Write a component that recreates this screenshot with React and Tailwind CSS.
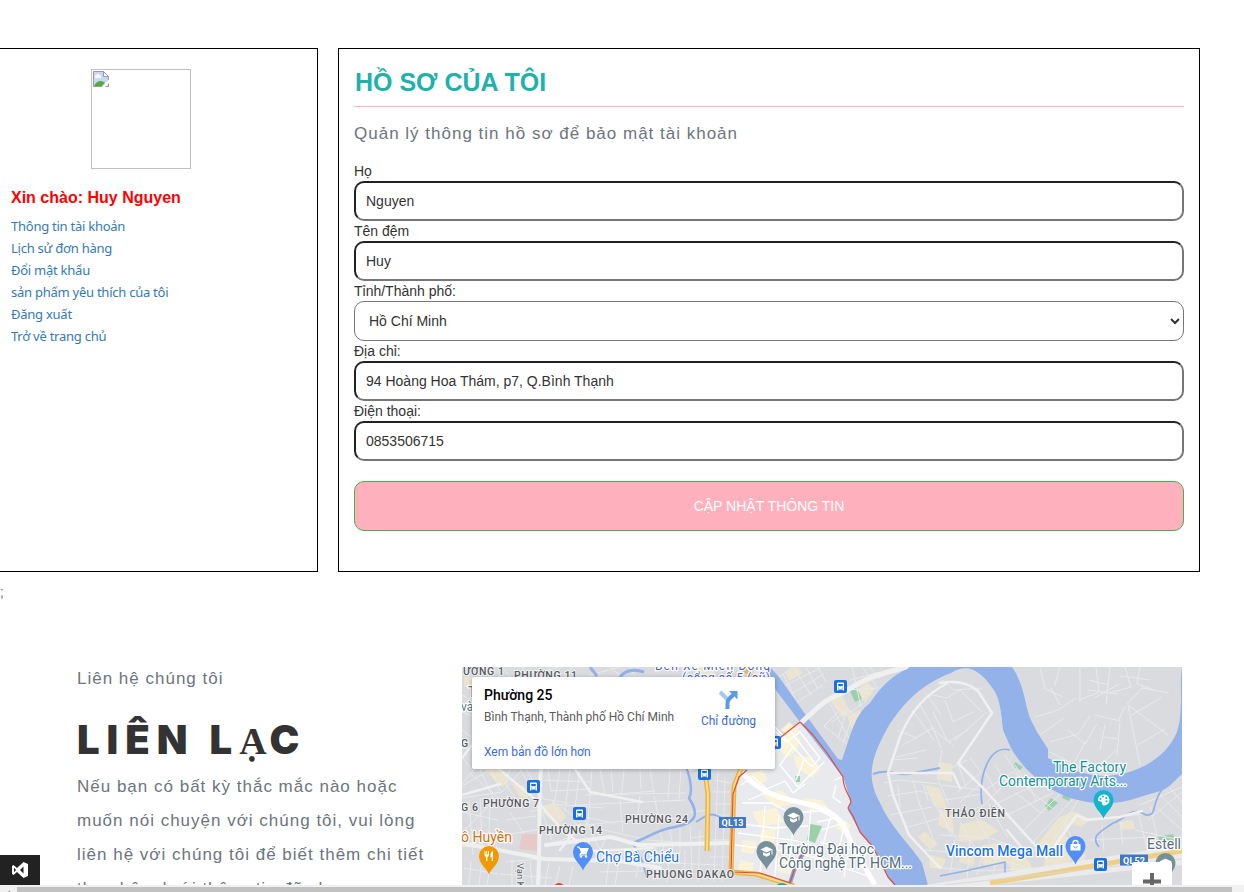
import React from 'react';

const LINKS = [
  'Thông tin tài khoản',
  'Lịch sử đơn hàng',
  'Đổi mật khẩu',
  'sản phẩm yêu thích của tôi',
  'Đăng xuất',
  'Trở về trang chủ',
];

function BrokenImage() {
  return (
    <div className="ml-[80px] h-[100px] w-[100px] border border-[#c0c0c0] p-px">
      <svg width="16" height="16" viewBox="0 0 16 16">
        <path d="M0.5 0.5H10.5L15.5 5.5V15.5H0.5Z" fill="#c6d8f7" stroke="#9a9a9a" />
        <path d="M2 6a1.6 1.6 0 0 1 1.5-2 2 2 0 0 1 3.6 0.6A1.3 1.3 0 0 1 7.5 7H3Z" fill="#fff" />
        <path d="M1 15c1-3 4-5 6.500-5 2 0 3.500 1 4.500 2L9 15Z" fill="#54ad38" />
        <path d="M10.500 0.500V5.500H15.500Z" fill="#fff" stroke="#9a9a9a" />
        <path d="M16 8.500 8.500 16H12L16 12Z" fill="#fff" />
      </svg>
    </div>
  );
}

function Field({ label, value }) {
  return (
    <label className="block">
      <span className="block h-5 leading-5">{label}</span>
      <input
        className="block h-10 w-full rounded-[10px] border-2 border-[#767676] bg-white px-[10px] text-[14px] outline-none [border-style:inset]"
        defaultValue={value}
      />
    </label>
  );
}

function Bus({ x, y }) {
  return (
    <g transform={`translate(${x - 6.5} ${y - 6.5})`}>
      <rect width="13" height="13" rx="2" fill="#1a6fe0" />
      <path d="M3 3.500Q3 2.500 4 2.500H9Q10 2.500 10 3.500V10.500H8.700V9.500H4.300V10.500H3Z" fill="#fff" />
      <rect x="4.200" y="4" width="4.600" height="2.200" fill="#1a6fe0" />
      <circle cx="4.700" cy="8" r="0.600" fill="#1a6fe0" />
      <circle cx="8.300" cy="8" r="0.600" fill="#1a6fe0" />
    </g>
  );
}

function Pin({ x, y, color, children }) {
  return (
    <g transform={`translate(${x} ${y})`}>
      <path d="M0 18.500C-1.500 13-10 8-10 0A10 10 0 0 1 10 0C10 8 1.500 13 0 18.500Z" fill={color} />
      {children}
    </g>
  );
}

function Cap() {
  return (
    <g fill="#fff">
      <path d="M-6-1.500 0-4.500 6-1.500 0 1.500Z" />
      <path d="M-3.500 1V4L0 5.700 3.500 4V1L0 2.800ZM5-1.500H6V3.500H5Z" />
    </g>
  );
}

const WHITE_ROADS = [
  'M741 785l12-8 14 12 18-8 8 12 12-9',
  'M760 740l14-10 12 12 14-10 20 26-8 9-21-22',
  'M775 727l18 20-13 18 18 22 26-25M789 729l28 37M804 760l-8 20',
  'M748 800l20-8 12 8M742 803h30l18 10 30-2 15 8',
  'M734 823l40 5 34-2M738 833l60 8 26 14',
  'M765 806l-5 68M779 815l-4 64',
  'M735 845l50 6 55 12M795 812l-6 50M811 809l-3 35',
  'M817 822l20-4M822 830l24-8M820 842l32 8M832 812l-10 36M845 824l-10 40',
  'M836 785l-3 12 8 6M835 780l8-4 4 16',
  'M850 835l-6 42M814 858l60 20',
];

const MINOR_WEST = [
  'M462 695l12 6 8-8M462 712l10 4M462 730l10 8M462 748l10 2M462 757l11 14-11 13',
  'M462 786l38-22M472 775l26 22-36 36M462 798l40-6 20-22M480 770l18 38M491 770l9 21',
  'M510 769l-5 15 12 16M520 769l13 22M526 769l18 30 24 4M548 769l3 22 40-2M541 780l50 2',
  'M560 769l-6 35 50 4M570 769l-5 43M580 770l-6 45 40 8M592 769l-4 55M600 769l5 26 50-4',
  'M611 769l2 23M624 769l-3 30M640 769l1 20M650 769l4 25M670 769l-2 30M681 769l-2 30',
  'M585 795l100-2M575 805l110-5M565 827l60-6 60-3M620 800l3 32M640 796l-3 26M654 796l5 23',
  'M530 812l28-8 18 14M540 806l12 34M552 800l14 34M510 812l14 22M506 820l30-4M505 835l36-6',
  'M462 812l36 8M469 800l4 55M480 798l3 58M490 806l-2 50M497 845l-4 15M462 846l38 4',
  'M545 847l34-14M566 825l22 38M575 822l25 38M585 820l20 40M595 828l45 10M605 840l-10 20',
  'M505 862l44-4M512 859v26M521 862v23M530 862l2 23M540 862v20M549 862l-4 23M500 874l52 4',
  'M464 868l34 6M471 861l-2 24M481 866l-2 19M490 866l-3 19M560 866l-5 19M573 866l-4 19',
  'M600 856l30 7M610 850l-4 35M620 853l-5 32M640 850l-4 28M655 846l-2 35M670 848l-3 35M685 850v30',
  'M600 872l90-2M640 862l80 3M647 840l72 5M660 830l4 20M670 829l3 20M680 828v25M690 825l2 45',
  'M690 812l18-2M690 838l17-2M700 830l-2 52M715 780l15 3M713 792h17M714 804h17M712 815h17M712 840h18M710 857h20',
  'M718 770l-4 112M725 777l-3 105M464 670l10 12M476 667l4 10M484 667l-5 10M502 667l8 10M524 667l-5 10',
  'M545 671l14-4M552 677l10-10M565 677l8-10M590 675l30-8M610 667l12 10M630 667l5 10M742 667l14 10M760 667l10 10',
];

const MINOR_EAST = [
  'M775 680l18-13M780 688l40-20M788 696l36-22M793 705l30-20M783 674l12 24M793 667l18 28M806 667l12 22M818 667l8 15',
  'M835 705l12 10 16-12M838 712l-14 14 23 18M831 723l17-14 14 14M846 713l-8 25M843 743l8-22M852 667l9 40M862 667l15 20M850 680l30-8M845 690l34-2',
  'M828 700l25 45M856 690l14 4M862 700l6-14M870 667l10 12',
  'M932 695l15 3 13-8 22 22M942 680l12 10 28-2M945 700l8 22 20-10M933 712l15 30 20-12M930 727l25 20M955 740l32-28',
  'M903 745l30-17 8 20M896 757l30-7M890 760l28-2M897 730l20 8M912 710l22 30M920 705l14 24M926 693l15 22',
  'M884 783l14-3 42 4M888 796l32-5 20 6M898 785l2 22M913 780l7 26M923 784l5 16M942 750l-4 28 11 28',
  'M949 769l18-9M958 764l8 23M970 758l11 14-23 20M942 785l46 6M945 800l38-6M950 817l30-10M890 815l42-8M905 828l35-10',
  'M920 805l15 38M932 800l25 40M940 809l12 28M960 822l16 28M975 815l15 28M988 803l20 35M1001 788l-28 28',
  'M981 783l-22 20M985 772l12 21M995 765l13 20M1005 755l18 27M1015 765l15 25M1025 775l11 26M985 790l28-18 22 16',
  'M994 805l40-20M1003 817l50-24M1020 834l40-40M1032 843l40-43M1045 855l33-55M1015 792l26 21M1026 788l26 20',
  'M940 835l50 3 38 14 50-3M925 850l60 5 40 12M930 867l50 4 60-3M955 840l-5 35M970 840l-3 38M985 845l-8 30M998 846l-5 30M1015 850l-3 30',
  'M1080 820l65-6M1090 840l60-3M1102 825l2 26M1120 821l3 24M1138 813l10 38M1150 806l7 30M1063 820l13 26M1140 805l42-18M1135 830l45 10M1148 820l34-28M1160 795l22 22M1170 788l12 14M1157 808l25 22',
  'M1040 667l5 22 18 8M1060 667l-5 18M1080 667v35M1096 667l3 25-20 8M1110 667l-4 37M1125 667l6 20-22 6M1140 667l-3 17 20 7M1089 680l20 5M1088 690l30 4M1094 698l25-14M1120 676l30 4',
  'M1035 717l23-7 18-12M1040 735l24-17M1050 742l28-8 12-18M1060 705l-9-17M1068 730l17 14 12-20M1095 715l25 6-3 35M1105 725l-5 25M1104 737l15 2M1125 706l-7 15',
  'M1128 705l12 60M1128 705l40 30M1132 715l30-18M1138 745l27-16M1050 752l33 17M1085 742l-12 23M1093 773l23-23M1127 704l15-16 27 5',
];

const BLOCKS = [
  'M484 769l16-1 10 13-8 6ZM542 812l16-7 9 12-10 8ZM541 806l12-3 5 11-9 2ZM511 783l13 3 8 18-12-7ZM464 677h9v10h-9ZM697 667h20l-4 10h-14ZM747 667l10 2 2 8h-12Z',
  'M785 672l12-5 6 6-14 8ZM829 700l12-8 9 20-8 5ZM847 716l13-6 3 13-11 7ZM857 690l10-9 8 8-10 14Z',
  'M938 762l14 2v18l-14-3ZM925 785l15 3 8 22-14-4ZM940 809l12 6 2 18-16-8ZM960 825l21-6 18 12-16 9-25 2ZM980 846l22-4 13 13-20 12-12-2ZM963 849l14 3-4 14-14-4ZM925 832l13 12-8 6-12-13ZM930 855l16 4-4 10-13-3ZM1003 856l20-5 10 18-18 7ZM1058 818l15-7 18 8-10 8-10-3-10 18-10 10-18-2ZM1047 850l16-16 14 10-10 25-25 5ZM1077 849l9 5-4 15-12-1ZM1119 822l14-2 2 9-14 1Z',
];

const WARD_BLOCKS = [
  'M777 742l14-10 10 9-8 13-8 4ZM793 755l16 2 12 12-9 9-15-10ZM789 722l12 10-8 6-12-8ZM747 775l15-5 6 10-12 7ZM760 793l22-2 15 12-20 5ZM752 812l24-4 8 14-24 5ZM761 830l15-2-2 15-15 2ZM743 840l14 2-4 12-12-2ZM778 857l20 4-2 14-18-3ZM803 798l18 2 8 8-18 3ZM839 817l12 8-5 10-10-7ZM740 860l14 3-2 10-14-3Z',
];

function Map() {
  return (
    <svg className="block" width="720" height="218" viewBox="462 667 720 218" fontFamily="Roboto, sans-serif">
      <rect x="462" y="667" width="720" height="218" fill="#d9dbdf" />
      <path d="M800 722 740 775 732 800 731 873 760 874 790 885H895L888 877 873 847 860 832 848 810 851 802 843 777 827 753Z" fill="#e8eaee" />
      <g fill="#ebe4d0">{BLOCKS.map((d) => <path key={d} d={d} />)}</g>
      <g fill="#fbf3d8">{WARD_BLOCKS.map((d) => <path key={d} d={d} />)}</g>
      <path d="M522 834h17l-2 17-18-2Z" fill="#e8c9ca" />
      <path d="M810 824l12 2-7 17-8-3ZM849 689l7-3 6 13-7 3ZM1015 762l8 5-3 3-6-3ZM1051 798l7 5-9 8-4-5ZM1063 795l8 2-2 4-7-3ZM795 776h5v6h-4ZM1158 837l15-3 2 9-14 3Z" fill="#9bd0ab" />

      <g fill="none" stroke="#e9eaec" strokeWidth="1" strokeLinejoin="round">
        {MINOR_WEST.map((d) => <path key={d} d={d} />)}
        {MINOR_EAST.map((d) => <path key={d} d={d} />)}
      </g>
      <g fill="none" stroke="#fff" strokeWidth="1.300" strokeLinejoin="round">
        {WHITE_ROADS.map((d) => <path key={d} d={d} />)}
      </g>

      <g fill="none" stroke="#90b1e9" strokeLinejoin="round">
        <path d="M687 769C692 785 692 793 689 798C700 815 696 823 675 827 655 830 644 840 632 843" strokeWidth="2.500" />
        <path d="M696 822C710 813 712 811 730 823M632 843q9 10 15 35" strokeWidth="2" />
        <path d="M620 677q8-10 24-5M590 667l7 9" strokeWidth="3" />
        <path d="M873 774C890 768 896 776 908 774L940 768" strokeWidth="2" />
        <path d="M1010 750C990 744 978 775 982 804M1163 788C1150 805 1158 816 1146 815 1130 805 1125 820 1113 823 1100 832 1090 836 1099 847" strokeWidth="1.700" />
        <path d="M940 876l25-5 40-9v21" strokeWidth="1.500" />
      </g>
      <path d="M770 667 779 677 805 714 838 759 842 760C850 738 854 715 870 703 881 687 890 677 910 667H1012C1025 685 1025 708 1031 720L1037 732 1048 749 1048 758C1065 767 1082 775 1103 776 1132 776 1165 761 1177 732 1184 710 1179 685 1182 667V774C1172 783 1168 789 1160 791L1140 797C1115 806 1094 804 1078 800 1050 794 1023 770 1011 748L1003 730C1001 710 1000 697 991 686 979 670 967 663 951 673 923 684 905 700 888 727 871 758 866 776 879 801 890 827 910 844 922 863L928 885H895L888 877 873 847 860 832 848 810 851 802 843 777 800 722 769 681Z" fill="#92b2e9" />

      <g fill="none" stroke="#f0f0f1" strokeLinejoin="round" strokeLinecap="round">
        <path d="M541 769C538 800 541 820 538 885M462 843L545 859 620 861 660 868M690 769l20-6M546 845l65-8 28 8 90-2" strokeWidth="4" />
        <path d="M499 769l37 31 29 33 28 18 60-3M462 758l40-52M500 784l-38 11M580 825l-20 25M575 769l15 23 52 10" strokeWidth="2.500" />
        <path d="M802 722C820 705 825 700 840 694 856 686 860 680 888 672L906 667" strokeWidth="5" />
        <path d="M946 684Q915 700 900 737L888 773 893 795 909 835 940 868M888 773h65l7 15M940 683q24-4 38 8l14 22-34 50M958 763l26 26 60 66M1007 830l21 25M1077 815l10 5 33-3 22-6M1076 816l-30 42" strokeWidth="2.500" />
      </g>
      <path d="M741 772C763 795 780 798 812 805 837 812 845 824 852 845L875 885" fill="none" stroke="#fff" strokeWidth="5" />

      <path d="M925 885 1182 845V865L990 885Z" fill="#ebebeb" />
      <path d="M990 883 1090 866.500 1182 851" fill="none" stroke="#efcf85" strokeWidth="5" />
      <path d="M945 885 1182 859M1060 885l122-18" fill="none" stroke="#d6d9de" strokeWidth="1" />
      <g fill="none" strokeLinejoin="round">
        <path d="M705 770l3 25-1 56M741 769l-7 17-3 86 25 2 38 12" stroke="#eab540" strokeWidth="5" />
        <path d="M705 770l3 25-1 56M741 769l-7 17-3 86 25 2 38 12" stroke="#f9dd8b" strokeWidth="2" />
        <path d="M741 667l12 10M753 667l-5 10" stroke="#e7b94e" strokeWidth="4" />
        <path d="M790 883l5-15 10-18" stroke="#7ea6df" strokeWidth="4" />
        <path d="M800 722 776 741M747 770 739 777 733 794 731 872 760 873 790 883 796 864 805 850M800 722 813 735 827 753 843 777C843 790 850 795 851 802L848 808 853 816 860 832 873 847 888 877 895 885" stroke="#e34b43" strokeWidth="1.200" />
      </g>

      <Bus x={533.500} y={786.500} />
      <Bus x={579.500} y={813.500} />
      <Bus x={704.500} y={773.500} />
      <Bus x={774.500} y={742.500} />
      <Bus x={840.500} y={686.500} />
      <Bus x={1100.500} y={864.500} />

      <Pin x={489} y={856} color="#f29900">
        <path d="M-4.500-5V-1Q-4.500 .5-3 .8V5H-1.600V.8Q0 .5 0-1V-5H-1V-1.500H-1.800V-5H-2.700V-1.500H-3.500V-5ZM4-5Q1.300-4 1.300 1H2.700V5H4Z" fill="#fff" />
      </Pin>
      <Pin x={583} y={852} color="#4f8ff7">
        <path d="M-6-5H-4L-3.500-3.500H5L3 1.500H-2.500L-3 3H4" fill="none" stroke="#fff" strokeWidth="1.200" />
        <path d="M-3.500-3.500H5L3 1H-2Z" fill="#fff" />
        <circle cx="-2" cy="4.500" r="1.200" fill="#fff" />
        <circle cx="3" cy="4.500" r="1.200" fill="#fff" />
      </Pin>
      <Pin x={793.500} y={817} color="#78909c"><Cap /></Pin>
      <Pin x={766.500} y={851} color="#78909c"><Cap /></Pin>
      <Pin x={1103.500} y={800} color="#12b5cb">
        <path d="M0-5.500A5.500 5.500 0 0 0-5.500 0C-5.500 2-3 1 -2 2S-2 5.500 1 5.500A5.500 5.500 0 0 0 0-5.500Z" fill="#fff" />
        <g fill="#12b5cb"><circle cx="-3" cy="-1" r="1" /><circle cx="-.5" cy="-3.500" r="1" /><circle cx="2.700" cy="-2" r="1" /><circle cx="3" cy="1.200" r="1" /></g>
      </Pin>
      <Pin x={1075.500} y={846} color="#4f8ff7">
        <path d="M-5-2H5V4.500H-5Z" fill="#fff" />
        <path d="M-2.500-1V-3A2.500 2.500 0 0 1 2.500-3V-1" fill="none" stroke="#fff" strokeWidth="1.300" />
        <path d="M-2 0.500Q0 3.500 2 .5" fill="none" stroke="#4f8ff7" />
      </Pin>
      <Pin x={1165.500} y={863} color="#78909c"><Cap /></Pin>
      <circle cx="559" cy="889" r="6" fill="#ea4335" />
      <circle cx="782" cy="891" r="8" fill="#12a9b9" />
      <rect x="719" y="817" width="27" height="11" fill="#3f79c5" />
      <rect x="1120" y="854.500" width="28" height="11" fill="#3f79c5" />
      <g fill="#fff" fontSize="9" fontWeight="700" textAnchor="middle">
        <text x="732.500" y="826" textLength="22">QL13</text>
        <text x="1134" y="863.500" textLength="22">QL52</text>
      </g>

      <g fill="#55595e" stroke="#f2f2f2" strokeWidth="2" paintOrder="stroke" strokeLinejoin="round" fontSize="10.500" fontWeight="500">
        <text x="463" y="675" textLength="41">ƯỜNG 1</text>
        <text x="514" y="679" textLength="63">PHƯỜNG 11</text>
        <text x="461" y="747">G</text>
        <text x="461" y="811" textLength="17">G 6</text>
        <text x="483" y="806.500" textLength="56">PHƯỜNG 7</text>
        <text x="539" y="833.500" textLength="63">PHƯỜNG 14</text>
        <text x="625" y="822.500" textLength="63">PHƯỜNG 24</text>
        <text x="646" y="877.500" textLength="88">PHUONG DAKAO</text>
        <text x="945" y="816.500" textLength="60">THẢO ĐIỀN</text>
        <text transform="translate(517 863) rotate(90)" fontSize="9.500" fontWeight="400">Vạn Kiếp</text>
      </g>
      <g stroke="#fff" strokeWidth="2.500" paintOrder="stroke" strokeLinejoin="round" fontSize="14">
        <g fill="#4a5fd0" fontSize="12">
          <text x="655" y="670" textLength="115">Bến Xe Miền Đông</text>
          <text x="682" y="682" textLength="88">(cổng số 5 (cũ)</text>
        </g>
        <text x="468" y="697" fill="#5d7782">T</text>
        <text x="461" y="711" fill="#5d7782" fontSize="12">và</text>
        <text x="461" y="842" fill="#d56e0c" textLength="51">ô Huyền</text>
        <text x="596" y="861.500" fill="#1a73e8" textLength="83">Chợ Bà Chiểu</text>
        <text x="779" y="854" fill="#546e7a" textLength="95">Trường Đại học</text>
        <text x="779" y="868" fill="#546e7a" textLength="133">Công nghệ TP. HCM...</text>
        <text x="1053" y="772" fill="#129198" textLength="73">The Factory</text>
        <text x="999" y="786" fill="#129198" textLength="128">Contemporary Arts...</text>
        <text x="946" y="856" fill="#1a73e8" fontWeight="500" textLength="117">Vincom Mega Mall</text>
        <text x="1147" y="849" fill="#546e7a" textLength="34">Estell</text>
      </g>
      <rect x="1132" y="862" width="40" height="40" rx="2" fill="#fff" />
      <path d="M1143 881.500h18M1152 873v12" stroke="#666" strokeWidth="4" />
    </svg>
  );
}

export default function App() {
  return (
    <div className="relative flex h-[892px] w-[1244px] flex-col overflow-hidden bg-white font-['Liberation_Sans',sans-serif] text-[14px] leading-5 text-[#333]">
      <main className="flex h-[885px] flex-col overflow-hidden">
        <section className="mt-12 flex h-[524px] shrink-0 gap-5">
          <aside className="w-[318px] border-y border-r border-black pl-[11px] pt-5">
            <BrokenImage />
            <h2 className="mt-[18px] text-[16px] font-bold leading-[22px] text-[#f00]">Xin chào: Huy Nguyen</h2>
            <nav className="mt-[6px] flex flex-col items-start font-['Noto_Sans',sans-serif] text-[13px] leading-[22px] tracking-[-0.25px] text-[#337ab7]">
              {LINKS.map((t) => <a key={t}>{t}</a>)}
            </nav>
          </aside>
          <div className="w-[862px] border border-black px-[15px]">
            <h1 className="h-[58px] border-b border-[#ffb0bd] pl-px pt-[17px] text-[25px] font-bold leading-8 text-[#20b2aa]">HỒ SƠ CỦA TÔI</h1>
            <p className="mt-[15px] h-[39px] text-[17px] leading-6 tracking-[1px] text-[#6c757d]">Quản lý thông tin hồ sơ để bảo mật tài khoản</p>
            <form>
              <Field label="Họ" value="Nguyen" />
              <Field label="Tên đệm" value="Huy" />
              <label className="block">
                <span className="block h-5 leading-5">Tỉnh/Thành phố:</span>
                <select className="block h-10 w-full rounded-[10px] border border-[#767676] bg-white pl-[10px] text-[14px]">
                  <option>Hồ Chí Minh</option>
                </select>
              </label>
              <Field label="Địa chỉ:" value="94 Hoàng Hoa Thám, p7, Q.Bình Thạnh" />
              <Field label="Điện thoại:" value="0853506715" />
              <button type="button" className="mt-5 block h-[50px] w-full rounded-[10px] border border-[#4caf50] bg-[#ffb0bd] text-[14px] text-white">CẬP NHẬT THÔNG TIN</button>
            </form>
          </div>
        </section>
        <div className="h-[95px] shrink-0 pt-[10px] text-[#6c757d]">;</div>
        <section className="flex shrink-0">
          <div className="w-[462px] pl-[77px] pr-4 text-[#6c757d]">
            <p className="text-[17px] leading-6 tracking-[1px]">Liên hệ chúng tôi</p>
            <h2 className="mt-[24px] h-[55px] whitespace-nowrap font-['Inter',sans-serif] text-[40px] font-black leading-[50px] tracking-[7px] text-[#333]">
              LIÊN L<span className="font-['Liberation_Serif',serif] text-[38px] font-bold tracking-[3px]">Ạ</span>C
            </h2>
            <p className="whitespace-nowrap text-[17px] leading-[34px] tracking-[1px]">
              Nếu bạn có bất kỳ thắc mắc nào hoặc<br />
              muốn nói chuyện với chúng tôi, vui lòng<br />
              liên hệ với chúng tôi để biết thêm chi tiết<br />
              theo bên dưới thông tin đã cho
            </p>
          </div>
          <div className="relative h-[218px] w-[720px] overflow-hidden">
            <Map />
            <div className="absolute left-[10px] top-[10px] flex h-[92px] w-[303px] rounded-[2px] bg-white font-['Roboto',sans-serif] text-[12px] shadow-[0_1px_4px_rgba(0,0,0,0.3)]">
              <div className="w-[218px] pl-3 pt-2">
                <div className="text-[14px] font-medium leading-5 text-black">Phường 25</div>
                <div className="mt-[4px] whitespace-nowrap leading-4 text-[#5b5b5b]">Bình Thạnh, Thành phố Hồ Chí Minh</div>
                <div className="mt-[19px] leading-4 text-[#3a6be0]">Xem bản đồ lớn hơn</div>
              </div>
              <div className="flex w-[77px] flex-col items-center pt-[13px] text-[#3a6be0]">
                <svg width="20" height="20" viewBox="0 0 20 20">
                  <path d="M1 2 8 9" stroke="#a5c8f5" strokeWidth="4" />
                  <path d="M8.500 19V13Q8.500 10.500 10.500 8.500L14.500 4.500" fill="none" stroke="#5b9ae6" strokeWidth="4" />
                  <path d="M10 1H18.500V9.500Z" fill="#5b9ae6" />
                </svg>
                <div className="mt-[3px] whitespace-nowrap leading-4">Chỉ đường</div>
              </div>
            </div>
          </div>
        </section>
      </main>
      <footer className="flex h-[7px] bg-[#f1f1f1] pt-[2px]">
        <div className="flex w-[17px] justify-center pt-[3px]">
          <svg width="4" height="3" viewBox="0 0 4 3"><path d="M3 0V3H0Z" fill="#a3a3a3" /></svg>
        </div>
        <div className="h-[5px] w-[1215px] bg-[#c1c1c1]" />
      </footer>
      <div className="absolute left-0 top-[855px] flex h-[30px] w-10 items-center justify-center bg-[#222]">
        <svg width="18" height="18" viewBox="0 0 18 18">
          <path fillRule="evenodd" d="M12.500 1 17 3V15L12.500 17 6 11 2.500 14 1 13V5L2.500 4 6 7ZM12.500 5.500 9 9 12.500 12.500ZM3 6.800V11.200L5 9Z" fill="#fff" />
        </svg>
      </div>
    </div>
  );
}
